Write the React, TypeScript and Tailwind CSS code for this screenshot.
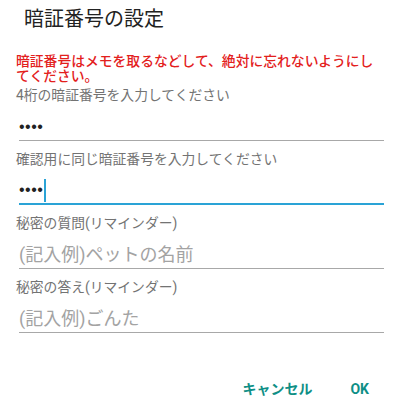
const jp = "font-['Roboto','Noto_Sans_CJK_JP',sans-serif]";

function Field({
  label,
  value,
  placeholder,
  focused,
}: {
  label: string;
  value?: string;
  placeholder?: string;
  focused?: boolean;
}) {
  return (
    <div>
      <div className="text-[13.8px] leading-[18px] text-[#737373]">{label}</div>
      <div
        className={`ml-[3px] flex h-[37px] items-end pb-[1px] ${
          focused ? "border-b-2 border-[#2aa3d6]" : "border-b border-[#a8a8a8]"
        }`}
      >
        {value ? (
          <div className="flex h-[24px] items-center">
            <span className="font-['Liberation_Sans',sans-serif] text-[16px] tracking-[0.5px] leading-[24px] text-[#222]">
              {value}
            </span>
            {focused && <span className="ml-[1px] h-[23px] w-[2px] bg-[#2aa3d6]" />}
          </div>
        ) : (
          <div className="text-[18px] leading-[24px] text-[#a3a3a3]">{placeholder}</div>
        )}
      </div>
    </div>
  );
}

export default function App() {
  return (
    <div className={`h-[414px] w-[400px] overflow-hidden bg-white ${jp}`}>
      <div className="pl-[24px] pt-[6px] text-[20px] leading-[26px] text-[#222]">暗証番号の設定</div>

      <div className="px-[16px]">
        <div className="mt-[22px] w-[362px] text-[13.8px] font-medium leading-[15px] text-[#e3201c]">
          暗証番号はメモを取るなどして、絶対に忘れないようにしてください。
        </div>

        <div className="mt-[2px] space-y-[9px]">
          <Field label="4桁の暗証番号を入力してください" value="••••" />
          <Field label="確認用に同じ暗証番号を入力してください" value="••••" focused />
          <Field label="秘密の質問(リマインダー)" placeholder="(記入例)ペットの名前" />
          <Field label="秘密の答え(リマインダー)" placeholder="(記入例)ごんた" />
        </div>
      </div>

      <div className="mt-[46px] flex items-center justify-end gap-[38px] pr-[31px] text-[14px] font-bold leading-[20px] text-[#0f8f86]">
        <button type="button">キャンセル</button>
        <button type="button">OK</button>
      </div>
    </div>
  );
}
